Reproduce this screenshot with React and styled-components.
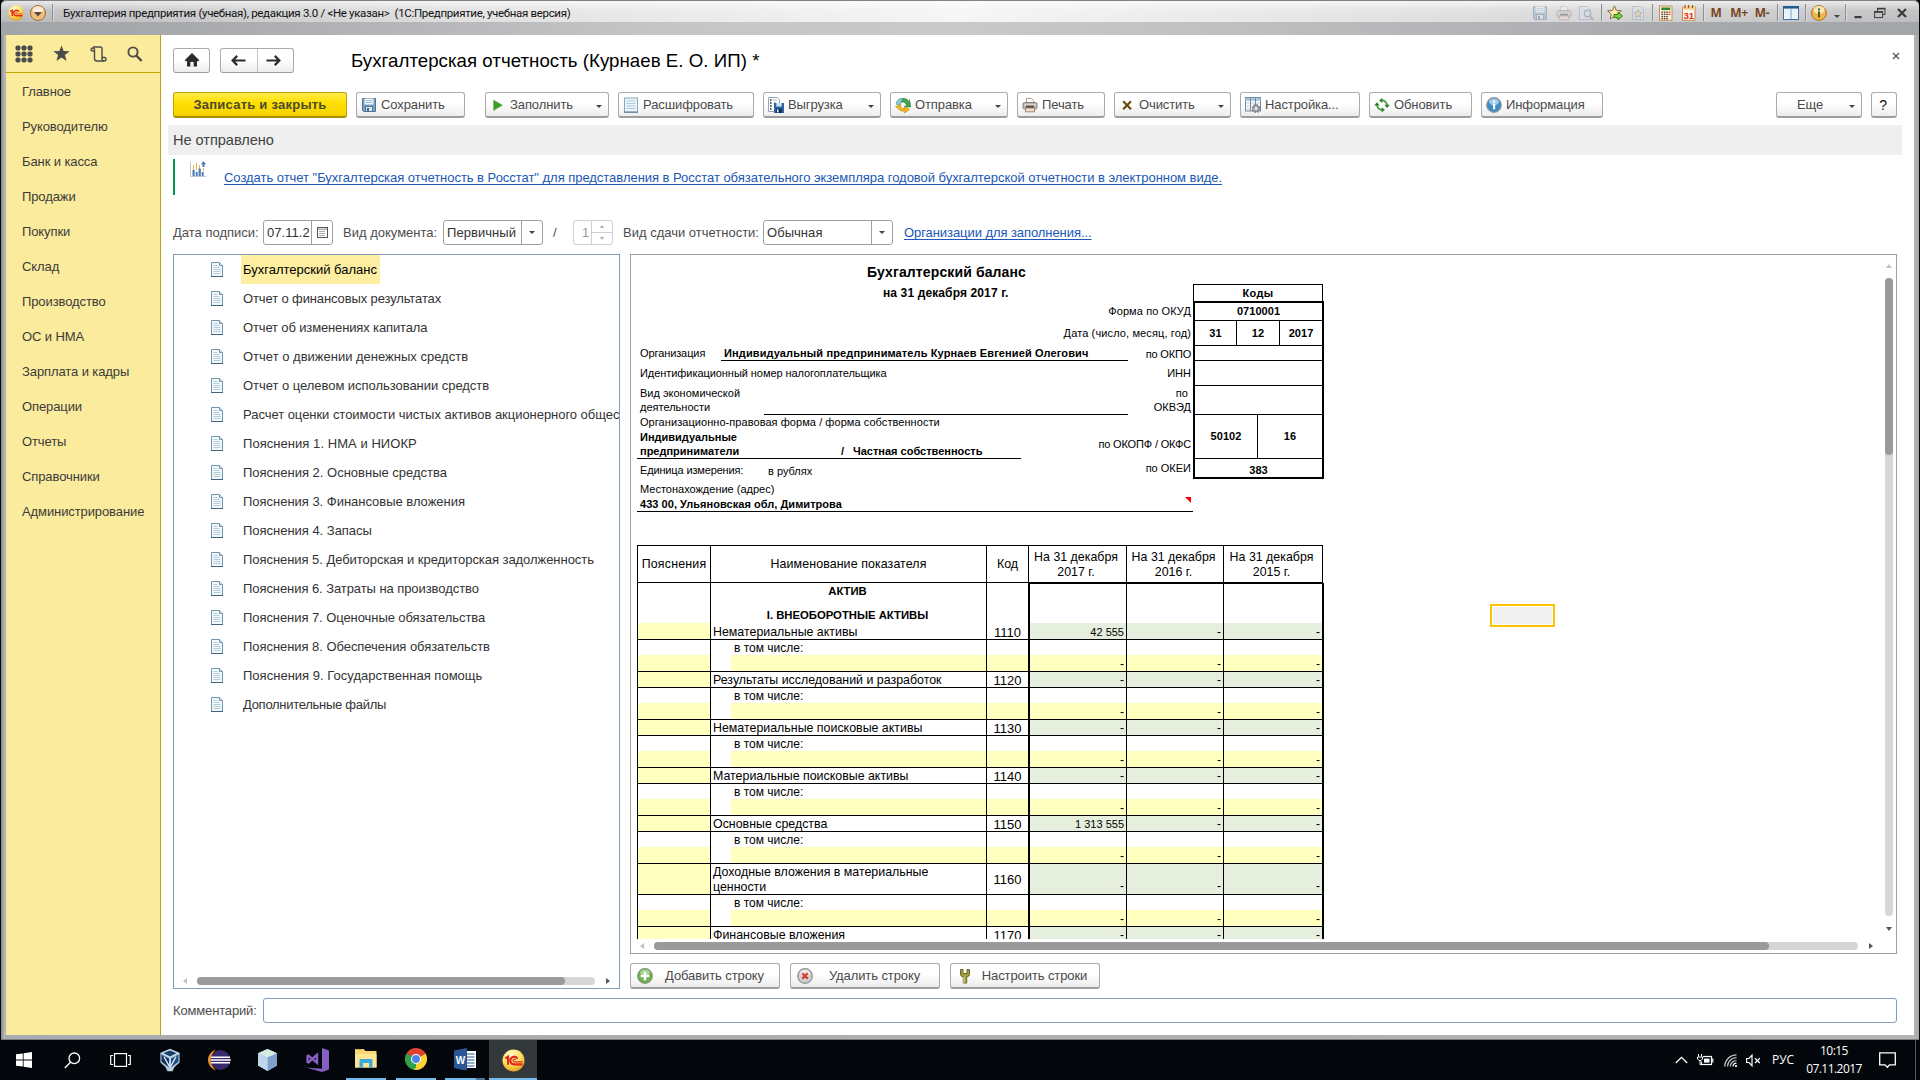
import React from "react";
import styled, { createGlobalStyle, css } from "styled-components";

const Global = createGlobalStyle`
  * { box-sizing: border-box; }
  html, body { margin: 0; padding: 0; background: #000; }
  body { font-family: "Liberation Sans", Arial, sans-serif; font-size: 13px; color: #444; overflow: hidden; }
`;

const Desktop = styled.div`
  width: 1920px;
  height: 1080px;
  display: flex;
  flex-direction: column;
  background: #050608;
  overflow: hidden;
`;

const Window = styled.div`
  height: 1040px;
  margin: 0 1px 0 1px;
  padding: 0 5px 5px 5px;
  display: flex;
  flex-direction: column;
  border-radius: 5px 5px 0 0;
  background: linear-gradient(90deg, #8b8b8e 0, #bcbcbe 4px, #a9aaad 5px, #b4b4b6 1913px, #a6a6a8 1918px);
  box-shadow: inset 0 -1px 0 #7c7c7e;
`;

/* ---------- title bar ---------- */
const TitleBar = styled.header`
  height: 22px;
  margin: 0 -5px;
  padding: 2px 5px 0 7px;
  flex: none;
  display: flex;
  align-items: center;
  border-top: 1px solid #807f82;
  border-radius: 6px 6px 0 0;
  background: linear-gradient(180deg, rgba(255,255,255,0.75) 0, rgba(255,255,255,0.35) 45%, rgba(255,255,255,0.25) 100%),
    linear-gradient(90deg, #a0a1a4 0, #d6d6d6 25%, #f2f2f2 50%, #d0d0d1 78%, #a5a6a9 100%);
`;
const TitleStrip = styled.div`
  height: 13px;
  margin: 0 -5px;
  flex: none;
  background: linear-gradient(90deg, #a3a4a7 0, #a9aaad 10%, #c6c6c7 35%, #c9c9ca 50%, #bfbfc0 65%, #a8a9ad 88%, #a4a5a9 100%);
`;
const OrbSlot = styled.span`
  width: ${(p) => p.$w}px;
  display: flex;
  flex: none;
`;
const BarSep = styled.i`
  width: 1px;
  height: 17px;
  flex: none;
  background: #8e8e91;
  box-shadow: 1px 0 0 #dedede;
  margin-left: ${(p) => p.$gap || 0}px;
`;
const WindowTitle = styled.div`
  margin-left: 10px;
  font: 11.5px/16px Roboto, "Open Sans", sans-serif;
  letter-spacing: -0.32px;
  color: #111;
  white-space: pre;
  flex: 1;
`;
const Slot = styled.span`
  width: ${(p) => p.$w}px;
  height: 18px;
  flex: none;
  display: flex;
  align-items: center;
  justify-content: center;
  opacity: ${(p) => (p.$dim ? 0.4 : 1)};
`;
const MemText = styled.b`
  font: bold 12px/16px "Open Sans", "Noto Sans", sans-serif;
  letter-spacing: -0.4px;
  color: #7a4520;
`;

/* ---------- frame ---------- */
const Client = styled.div`
  flex: 1;
  min-height: 0;
  display: flex;
  background: #fff;
`;
const Sidebar = styled.nav`
  width: 155px;
  flex: none;
  background: #fbeb9c;
  border-right: 1px solid #bca31b;
`;
const SideIcons = styled.div`
  height: 38px;
  display: flex;
  align-items: center;
  gap: 20px;
  padding-left: 9px;
  border-bottom: 1px solid #c4a800;
`;
const SideItem = styled.div`
  height: 35px;
  line-height: 35px;
  padding-left: 16px;
  letter-spacing: -0.1px;
  color: #3b3b3b;
  white-space: nowrap;
`;
const SideList = styled.div`
  padding-top: 1px;
`;
const Main = styled.main`
  flex: 1;
  min-width: 0;
  display: flex;
  flex-direction: column;
  padding: 12px 17px 0 12px;
`;

/* ---------- buttons ---------- */
const buttonFace = css`
  border: 1px solid #ababab;
  border-bottom: 2px solid #9d9d9d;
  border-radius: 3px;
  background: linear-gradient(180deg, #fff 0, #fff 45%, #ececec 100%);
`;
const Head = styled.div`
  height: 26px;
  display: flex;
  align-items: center;
`;
const NavButton = styled.div`
  ${buttonFace}
  border-bottom-width: 1px;
  width: 37px;
  height: 25px;
  display: flex;
  align-items: center;
  justify-content: center;
`;
const NavPair = styled.div`
  ${buttonFace}
  border-bottom-width: 1px;
  width: 74px;
  height: 25px;
  margin-left: 10px;
  display: grid;
  grid-template-columns: 1fr 1fr;
`;
const NavHalf = styled.span`
  display: flex;
  align-items: center;
  justify-content: center;
  padding-right: 1px;
  & + & { border-left: 1px solid #c4c4c4; padding-right: 4px; }
`;
const Title = styled.h1`
  margin: 1px auto 0 57px;
  font-size: 18.67px;
  font-weight: 400;
  line-height: 26px;
  color: #000;
  letter-spacing: 0.04px;
`;
const CloseX = styled.span`
  width: 10px;
  margin: 0 -5px 8px 0;
  display: flex;
`;
const Toolbar = styled.div`
  margin-top: 19px;
  height: 26px;
  display: flex;
  gap: 9px;
`;
const Button = styled.div`
  ${buttonFace}
  width: ${(p) => p.$w}px;
  height: 26px;
  margin-left: ${(p) => (p.$push === "auto" ? "auto" : `${p.$push || 0}px`)};
  padding: 0 6px 0 4px;
  display: flex;
  align-items: center;
  gap: ${(p) => (p.$gap === undefined ? 4 : p.$gap)}px;
  color: ${(p) => p.$ink || "#4a4a4a"};
  font-size: ${(p) => p.$fs || 13}px;
  white-space: nowrap;
  letter-spacing: -0.1px;
`;
const PrimaryButton = styled.div`
  width: 174px;
  height: 26px;
  border: 1px solid #bfa100;
  border-bottom: 2px solid #a88e00;
  border-radius: 3px;
  background: linear-gradient(180deg, #ffe94a 0, #ffe000 45%, #f5d200 100%);
  color: #4d4a2e;
  font-weight: 700;
  letter-spacing: 0.24px;
  display: flex;
  align-items: center;
  justify-content: center;
`;
const ButtonIcon = styled.span`
  width: 16px;
  height: 16px;
  flex: none;
  display: flex;
  align-items: center;
  justify-content: center;
`;
const ButtonText = styled.span`
  flex: ${(p) => (p.$center ? 1 : "none")};
  text-align: center;
`;
const Caret = styled.i`
  width: 0;
  height: 0;
  margin: ${(p) => p.$m || "4px 0 0 auto"};
  border: 3px solid transparent;
  border-top-color: ${(p) => p.$c || "#444"};
  border-bottom: 0;
  flex: none;
`;

const Status = styled.div`
  height: 30px;
  margin: 7px -5px 0 -5px;
  padding-left: 5px;
  line-height: 30px;
  font-size: 14.6px;
  letter-spacing: -0.05px;
  background: #efefef;
  color: #444;
`;
const Notice = styled.div`
  height: 36px;
  margin-top: 4px;
  border-left: 2px solid #00984a;
  padding: 2px 0 0 15px;
  display: flex;
  align-items: flex-start;
`;
const Link = styled.a`
  color: #2057b5;
  text-decoration: underline;
  text-underline-offset: 2px;
  text-decoration-thickness: 1px;
  text-decoration-skip-ink: none;
  white-space: nowrap;
  letter-spacing: ${(p) => p.$ls || 0}px;
  margin: ${(p) => p.$m || 0};
`;

/* ---------- fields ---------- */
const Filters = styled.div`
  height: 26px;
  margin-top: 24px;
  display: flex;
  align-items: center;
`;
const Label = styled.label`
  width: ${(p) => p.$w}px;
  flex: none;
  color: #4d4d4d;
  white-space: nowrap;
  letter-spacing: ${(p) => p.$ls || 0}px;
`;
const Field = styled.div`
  width: ${(p) => p.$w}px;
  height: 25px;
  margin-right: ${(p) => p.$mr || 0}px;
  flex: none;
  border: 1px solid ${(p) => (p.$off ? "#cfcfcf" : "#a0a0a0")};
  border-radius: 3px;
  display: flex;
  color: ${(p) => (p.$off ? "#999" : "#333")};
  background: #fff;
`;
const FieldText = styled.span`
  flex: 1;
  min-width: 0;
  overflow: hidden;
  padding-left: ${(p) => p.$pl || 3}px;
  line-height: 23px;
  white-space: nowrap;
  letter-spacing: 0.05px;
`;
const FieldKnob = styled.span`
  width: ${(p) => p.$w}px;
  border-left: 1px solid ${(p) => (p.$off ? "#cfcfcf" : "#a0a0a0")};
  display: flex;
  flex-direction: column;
  align-items: center;
  justify-content: center;
`;
const SpinHalf = styled.span`
  width: 100%;
  flex: 1;
  display: flex;
  align-items: center;
  justify-content: center;
  & + & { border-top: 1px solid #cfcfcf; }
`;
const SpinTip = styled.i`
  border: 2px solid transparent;
  ${(p) => (p.$up ? "border-bottom: 3px solid #aaa; border-top: 0;" : "border-top: 3px solid #aaa; border-bottom: 0;")}
`;

/* ---------- work area ---------- */
const Work = styled.div`
  height: 735px;
  margin-top: 9px;
  display: flex;
  gap: 10px;
`;
const TreePanel = styled.section`
  width: 447px;
  flex: none;
  border: 1px solid #7f9db9;
  display: flex;
  flex-direction: column;
  overflow: hidden;
`;
const TreeList = styled.div`
  flex: 1;
  min-height: 0;
  overflow: hidden;
`;
const TreeRow = styled.div`
  height: 29px;
  padding-left: 36px;
  display: flex;
  align-items: center;
  color: #333;
  white-space: nowrap;
  svg { flex: none; }
`;
const TreeLabel = styled.span`
  flex: none;
  margin-left: 17px;
  padding: 0 3px 0 2px;
  height: 29px;
  line-height: 30px;
  letter-spacing: ${(p) => p.$ls || 0}px;
  ${(p) => p.$active && css`background: #fdeea2; color: #000;`}
`;
const Right = styled.section`
  flex: 1;
  min-width: 0;
  display: flex;
  flex-direction: column;
`;
const ReportPanel = styled.div`
  height: 700px;
  border: 1px solid #a0a0a0;
  display: grid;
  grid-template: 684px 14px / 1fr 14px;
`;
const Sheet = styled.div`
  position: relative;
  overflow: hidden;
  padding-left: 6px;
  font-size: 11px;
  color: #000;
`;
const CellCursor = styled.div`
  position: absolute;
  left: 859px;
  top: 349px;
  width: 65px;
  height: 23px;
  border: 2px solid #fcc500;
  box-shadow: inset 0 0 0 1px #fff;
  background: #f1f1f1;
`;
const ScrollRow = styled.div`
  height: 14px;
  display: flex;
  align-items: center;
  padding: ${(p) => p.$p};
`;
const ScrollCol = styled.div`
  display: flex;
  flex-direction: column;
  align-items: center;
  padding: 9px 0 8px 0;
`;
const Track = styled.div`
  background: #d6d6d6;
  border-radius: 4px;
  ${(p) => (p.$v ? css`width: 8px; height: 638px; margin: 10px 0 11px;` : css`height: 8px; flex: 1; margin: 0 11px 0 10px;`)}
`;
const Thumb = styled.div`
  background: #9a9a9a;
  border-radius: 4px;
  ${(p) => (p.$v ? css`width: 8px; height: ${p.$len}px;` : css`height: 8px; width: ${p.$len}px;`)}
`;
const Tip = styled.i`
  width: 0;
  height: 0;
  flex: none;
  border: 3px solid transparent;
  ${(p) => p.$d === "left" && css`border-right: 4px solid #c0c0c0; border-left: 0;`}
  ${(p) => p.$d === "right" && css`border-left: 4px solid #555; border-right: 0;`}
  ${(p) => p.$d === "up" && css`border-bottom: 4px solid #c0c0c0; border-top: 0;`}
  ${(p) => p.$d === "down" && css`border-top: 4px solid #555; border-bottom: 0;`}
`;

/* ---------- report form header ---------- */
const FormHead = styled.div`
  display: flex;
  height: 290px;
`;
const FormLeft = styled.div`
  width: 556px;
`;
const FormRow = styled.div`
  height: ${(p) => p.$h}px;
  display: flex;
  align-items: center;
  line-height: 14px;
  white-space: nowrap;
  padding-left: ${(p) => (p.$pl === undefined ? 3 : p.$pl)}px;
  font-weight: ${(p) => (p.$b ? 700 : 400)};
  font-size: ${(p) => p.$fs || 11}px;
  padding-top: ${(p) => p.$pt || 0}px;
  padding-bottom: ${(p) => p.$pb || 0}px;
  letter-spacing: ${(p) => p.$ls || 0}px;
`;
const Value = styled.div`
  width: ${(p) => p.$w}px;
  height: 100%;
  padding-left: ${(p) => p.$pl || 0}px;
  display: flex;
  align-items: center;
  border-bottom: 1px solid ${(p) => (p.$line ? "#000" : "transparent")};
  font-weight: ${(p) => (p.$b ? 700 : 400)};
  letter-spacing: ${(p) => p.$ls || 0}px;
`;
const RowCode = styled.div`
  margin-left: auto;
  padding: 0 2px ${(p) => p.$lift || 0}px 0;
  text-align: right;
  letter-spacing: ${(p) => p.$ls || 0}px;
`;
const Owner = styled.span`
  width: ${(p) => p.$w}px;
  align-self: ${(p) => (p.$end ? "flex-end" : "center")};
`;
const RedMark = styled.i`
  margin: 1px 2px auto auto;
  border-top: 6px solid #f00;
  border-left: 6px solid transparent;
`;
const Codes = styled.div`
  width: 131px;
  padding-top: 29px;
  font-weight: 700;
  letter-spacing: 0.05px;
`;
const CodesHead = styled.div`
  width: 130px;
  height: 17px;
  line-height: 17px;
  text-align: center;
  border: 1px solid #000;
  border-bottom: 0;
  letter-spacing: 0.3px;
`;
const CodesBody = styled.div`
  border: 2px solid #000;
`;
const CodeLine = styled.div`
  height: ${(p) => p.$h}px;
  padding-top: ${(p) => p.$pt || 0}px;
  display: grid;
  grid-template-columns: ${(p) => p.$cols || "1fr"};
  & + & { border-top: 1px solid #000; }
`;
const CodeCell = styled.span`
  display: flex;
  align-items: center;
  justify-content: center;
  padding-bottom: 1px;
  & + & { border-left: 1px solid #000; }
`;

/* ---------- balance table ---------- */
const cols = "73px 276px 43px 97px 97px 100px";
const Table = styled.div`
  width: 687px;
  border-left: 1px solid #000;
  font-size: 12.4px;
  line-height: 15px;
`;
const HeadRow = styled.div`
  width: 685px;
  height: 38px;
  display: grid;
  grid-template-columns: 73px 276px 42px 98px 97px 99px;
  border-top: 1px solid #000;
`;
const HeadCell = styled.div`
  display: flex;
  align-items: center;
  justify-content: center;
  text-align: center;
  white-space: nowrap;
  padding: ${(p) => p.$p || 0};
  border-right: 1px solid #000;
  border-bottom: 1px solid #000;
  letter-spacing: ${(p) => p.$ls || 0}px;
`;
const BodyRow = styled.div`
  height: ${(p) => p.$h}px;
  display: grid;
  grid-template-columns: ${cols};
  grid-template-rows: ${(p) => p.$h}px;
`;
const fills = { y: "#ffffc0", g: "#e6efdd", w: "#fff" };
const Cell = styled.div`
  min-width: 0;
  min-height: 0;
  display: flex;
  white-space: nowrap;
  background: ${(p) => fills[p.$fill || "w"]};
  border-right: ${(p) => (p.$thick ? 2 : 1)}px solid #000;
  border-bottom: ${(p) => (p.$line ? "1px solid #000" : "0")};
  border-top: ${(p) => (p.$top ? "1px solid #000" : "0")};
  align-items: ${(p) => p.$align || "center"};
  justify-content: ${(p) => p.$justify || "flex-start"};
  padding: ${(p) => (p.$pt === undefined ? 2 : p.$pt)}px 2px 0 2px;
  font-size: ${(p) => p.$fs || 12.4}px;
`;
const NameCell = styled(Cell)`
  padding-left: ${(p) => (p.$indent ? 23 : 2)}px;
`;
const IndentCell = styled.div`
  padding-left: 20px;
  background: #fff;
  border-right: 1px solid #000;
  border-bottom: 1px solid #000;
  &::before { content: ""; display: block; height: 100%; background: #ffffc0; }
`;
const Section = styled.div`
  padding: 1px 2px 0 0;
  border-right: 1px solid #000;
  font-size: 11.3px;
  font-weight: 700;
  text-align: center;
  display: flex;
  flex-direction: column;
  justify-content: space-between;
`;
const Num = styled.span`
  font-size: ${(p) => (p.$dash ? 12 : 11)}px;
`;

const RowActions = styled.div`
  margin-top: 9px;
  display: flex;
  gap: 10px;
`;
const ActionButton = styled(Button)`
  padding: 0 7px 0 6px;
`;
const Comment = styled.div`
  height: 26px;
  margin-top: 8px;
  display: flex;
  align-items: center;
`;
const CommentInput = styled.div`
  flex: 1;
  height: 25px;
  border: 1px solid #7f9db9;
  border-radius: 3px;
`;

/* ---------- taskbar ---------- */
const Taskbar = styled.footer`
  height: 40px;
  display: flex;
  background: #03070c;
  color: #fff;
  font: 12px/18px "Open Sans", "Noto Sans", sans-serif;
`;
const Task = styled.span`
  width: ${(p) => p.$w}px;
  height: 40px;
  flex: none;
  display: flex;
  align-items: center;
  justify-content: center;
  background: ${(p) => (p.$active ? "#33383b" : "none")};
  box-shadow: ${(p) => (p.$active ? "inset 0 -2px 0 #76b9ed" : "none")};
`;
const OpenTask = styled(Task)`
  flex-direction: column;
  justify-content: space-between;
  padding-top: 8px;
`;
const Under = styled.i`
  width: 40px;
  height: 2px;
  background: ${(p) => (p.$stack ? "linear-gradient(90deg, #76b9ed 0 31px, #4a7596 31px)" : "#76b9ed")};
`;
const Tray = styled.div`
  margin-left: auto;
  display: flex;
  align-items: center;
`;
const Clock = styled.div`
  width: 62px;
  margin-left: 5px;
  text-align: center;
  letter-spacing: -0.55px;
`;
const Lang = styled.span`
  width: 30px;
  margin-left: 4px;
  text-align: center;
  letter-spacing: -0.1px;
`;
const PeekLine = styled.i`
  width: 1px;
  height: 40px;
  margin: 0 4px 0 6px;
  background: #54585b;
`;

/* ---------- icons ---------- */
const Svg = ({ w = 16, h = w, vb, children }) => (
  <svg width={w} height={h} viewBox={vb || `0 0 ${w} ${h}`} display="block">{children}</svg>
);
const Orb1C = ({ s = 15 }) => (
  <Svg w={s} vb="0 0 24 24">
    <defs>
      <radialGradient id={`orb${s}`} cx="0.4" cy="0.25" r="0.8">
        <stop offset="0" stopColor="#fffbd0" /><stop offset="0.55" stopColor="#ffdf5e" /><stop offset="1" stopColor="#e09a1c" />
      </radialGradient>
    </defs>
    <circle cx="12" cy="12" r="11.5" fill={`url(#orb${s})`} />
    <g fill="none" stroke="#e0281c" strokeWidth="2.2">
      <path d="M3.5 9.8 L6.3 8 V16.5" />
      <path d="M16.2 10.2 A4 4 0 1 0 13 16 H21.5" />
      <path d="M14.2 11.6 A1.4 1.4 0 1 0 13 13.4 H21.5" strokeWidth="1.2" />
    </g>
  </Svg>
);
const MenuOrb = () => (
  <Svg w={16}>
    <circle cx="8" cy="8" r="7.5" fill="#efbe7c" stroke="#9c6f38" />
    <ellipse cx="8" cy="4.8" rx="5.5" ry="3.6" fill="#fbe9cf" />
    <path d="M4 7 H12 L8 11.5 Z" fill="#5b4a38" /><path d="M4 5.6H12" stroke="#fff" />
  </Svg>
);
const Floppy = ({ s = 16 }) => (
  <Svg w={s} vb="0 0 16 16">
    <path d="M1.5 1.5H14.5V14.5H2.5L1.5 13.5Z" fill="#7ba0c0" stroke="#4e7698" />
    <rect x="3.5" y="1.5" width="9" height="6" fill="#f4f8fb" /><path d="M4.5 3.5h7M4.5 5.5h7" stroke="#9db8cc" />
    <rect x="4.5" y="9.5" width="7" height="5" fill="#dfe6ea" stroke="#4e7698" /><rect x="6" y="11" width="2" height="3" fill="#42617c" />
  </Svg>
);
const Printer = () => (
  <Svg w={16}>
    <path d="M4.5 6V1.5h5l2 2V6" fill="#fff" stroke="#a9a19a" />
    <rect x="1" y="5.5" width="14" height="6.5" rx="1.5" fill="#b8b3ae" stroke="#8b847d" />
    <path d="M2 8h12" stroke="#ece8e4" /><rect x="4" y="8.7" width="8" height="3" fill="#4f4640" />
    <rect x="3.5" y="11" width="9" height="3.8" fill="#f2dccb" stroke="#9b8a7c" />
  </Svg>
);
const Preview = () => (
  <Svg w={16}>
    <path d="M1.5 1.5H9L12.5 5V14.5H1.5Z" fill="#dfe9f1" stroke="#7d9cb5" />
    <circle cx="9.5" cy="8.5" r="3.2" fill="#cfe4f5" stroke="#58809f" strokeWidth="1.4" /><path d="M12 11L15 15" stroke="#a07550" strokeWidth="2" />
  </Svg>
);
const StarAdd = () => (
  <Svg w={16}>
    <path d="M7.5 .8L9.4 5.4 14.3 5.8 10.6 9 11.7 14 7.5 11.3 3.2 14 4.3 9 .6 5.8 5.5 5.4Z" fill="#ffe9b5" stroke="#8b6d3f" />
    <path d="M7 9.5H11V7L15.5 11 11 15V12.5H7Z" fill="#79d23c" stroke="#2e7d14" />
  </Svg>
);
const StarPage = () => (
  <Svg w={14} h={16}>
    <path d="M1.5 1.5H9L12.5 5V14.5H1.5Z" fill="#dbe7ef" stroke="#7d9cb5" />
    <path d="M7 4.5L8.2 7.3 11 7.5 8.8 9.4 9.6 12.4 7 10.8 4.4 12.4 5.2 9.4 3 7.5 5.8 7.3Z" fill="#efd9b0" stroke="#9b7a4c" />
  </Svg>
);
const Calc = () => (
  <Svg w={14} h={16}>
    <rect x=".5" y="1" width="12.5" height="14.3" fill="#fdf0d8" stroke="#c79358" />
    <rect x="2.3" y="2.5" width="9" height="2.6" fill="#2d8a2f" />
    <g fill="#4a3526">{[6.5, 8.7, 10.9, 13].map((y) => [2.5, 4.9, 7.3].map((x) => <rect key={`${x}-${y}`} x={x} y={y} width="1.5" height="1.3" />))}</g>
    <g fill="#d33"><rect x="9.7" y="6.5" width="1.6" height="1.3" /><rect x="9.7" y="8.7" width="1.6" height="1.3" /></g>
  </Svg>
);
const CalendarIcon = () => (
  <Svg w={14} h={16}>
    <rect x=".5" y="2" width="12.5" height="13.3" fill="#fff6ea" stroke="#c58b4e" /><rect x=".5" y="1" width="12.5" height="3.5" fill="#f2c88f" />
    <path d="M3 0v3M6.7 0v3M10.5 0v3" stroke="#7b4c1c" />
    <text x="6.8" y="13.6" fontSize="9.5" fontFamily="Liberation Sans" fontWeight="700" fill="#e0301e" textAnchor="middle">31</text>
  </Svg>
);
const Panes = () => (
  <Svg w={16} h={14}>
    <rect x=".5" y=".5" width="15" height="13" fill="#fff" stroke="#3f6f9c" /><rect x="0" y="0" width="16" height="2.6" fill="#1f5a90" />
    <path d="M8 2v11" stroke="#6f95b8" /><path d="M1.5 12.5V3H7V12.5ZM9 12.5V3H14.5V12.5Z" fill="#eaf2f9" />
  </Svg>
);
const InfoOrange = () => (
  <Svg w={16}>
    <circle cx="8" cy="8" r="7.4" fill="#f7b24a" stroke="#a8702a" /><ellipse cx="8" cy="5" rx="5.6" ry="3.9" fill="#fde3b4" />
    <rect x="7" y="6.4" width="2" height="6" fill="#2d6f1e" /><rect x="7" y="3.4" width="2" height="2" fill="#2d6f1e" />
  </Svg>
);
const InfoBlue = () => (
  <Svg w={16}>
    <circle cx="8" cy="8" r="7.3" fill="#3f8cc5" stroke="#90989d" strokeWidth="1.2" /><ellipse cx="8" cy="4.8" rx="5" ry="3.3" fill="#9dcbea" />
    <rect x="7" y="6.7" width="2.2" height="5.6" fill="#fff" /><rect x="7" y="3.6" width="2.2" height="2" fill="#fff" />
  </Svg>
);
const Minus = () => <Svg w={8} h={12}><rect x="0.5" y="9" width="7" height="2.2" fill="#3c3c3e" /></Svg>;
const Restore = () => (
  <Svg w={12} h={12}><path d="M3.5 4V1.5H11V7.5H9" fill="none" stroke="#3c3c3e" /><path d="M3 1.6H11.4" stroke="#3c3c3e" strokeWidth="1.6" /><rect x=".6" y="4.6" width="8" height="6" fill="none" stroke="#3c3c3e" /><path d="M.2 5H9" stroke="#3c3c3e" strokeWidth="1.6" /></Svg>
);
const Cross = () => <Svg w={10}><path d="M1 1L9 9M9 1L1 9" stroke="#3c3c3e" strokeWidth="2.2" /></Svg>;
const ThinCross = () => <Svg w={8}><path d="M1 1L7 7M7 1L1 7" stroke="#555" strokeWidth="1.3" /></Svg>;
const GridIcon = () => (
  <Svg w={18}>{[3, 9, 15].map((y) => [3, 9, 15].map((x) => <rect key={`${x}${y}`} x={x - 2.5} y={y - 2.5} width="5" height="5" rx="1.8" fill="#4b4b4b" />))}</Svg>
);
const SideStar = () => <Svg w={17}><path d="M8.5 .4L10.6 6 16.7 6.3 11.9 10 13.6 16 8.5 12.5 3.4 16 5.1 10 .3 6.3 6.4 6Z" fill="#4b4b4b" /></Svg>;
const Scroll = () => (
  <Svg w={17} h={16}>
    <path d="M4.5 5V3A2 2 0 0 0 1 3.2Q1 5 3 5H4.5V12.5Q4.5 15 7 15H13.5" fill="none" stroke="#4b4b4b" strokeWidth="1.4" />
    <path d="M3 1H10Q12 1 12 3V11.5H14.7Q16 11.5 16 13A2 2 0 0 1 12 13V11.5" fill="none" stroke="#4b4b4b" strokeWidth="1.4" />
  </Svg>
);
const SideSearch = () => <Svg w={16}><circle cx="6" cy="6" r="4.6" fill="none" stroke="#4b4b4b" strokeWidth="1.9" /><path d="M9.3 9.5L14.6 15" stroke="#4b4b4b" strokeWidth="2.5" /></Svg>;
const Home = () => <Svg w={16} h={14}><path d="M8 0L15.3 7.3 14 8.6 13 7.7V13.5H9.6V9H6.4V13.5H3V7.7L2 8.6 .7 7.3Z" fill="#2b2b2b" /></Svg>;
const Arrow = ({ flip }) => (
  <Svg w={15} h={11}><g transform={flip ? "translate(15 0) scale(-1 1)" : undefined}><path d="M1.5 5.5H14.5M6.2 .9L1.6 5.5 6.2 10.1" fill="none" stroke="#2b2b2b" strokeWidth="2.2" /></g></Svg>
);
const Play = () => <Svg w={16}><path d="M3.5 3L12.5 8.2 3.5 13.5Z" fill="#36a11e" stroke="#7fa874" strokeWidth=".6" /></Svg>;
const ListDoc = () => (
  <Svg w={16}><rect x="1.5" y="1" width="13" height="14" fill="#eef5fa" stroke="#88a8bf" /><path d="M3.5 4h9M3.5 6.5h9M3.5 9h9M3.5 11.5h9" stroke="#aac9dc" /><path d="M1 15.2h14" stroke="#4f7896" /></Svg>
);
const ExportIcon = () => (
  <Svg w={16}>
    <path d="M.5 .5H9.5L11.5 3V14.5H.5Z" fill="#fff" stroke="#98a7b3" /><path d="M2 3h1.5M2 6h1.5M2 9h1.5M2 12h1.5" stroke="#222" strokeWidth="1.5" /><path d="M5 3h4M5 6h3" stroke="#9fb8cb" />
    <rect x="6" y="6" width="10" height="10" fill="#2d62a0" /><rect x="8.3" y="6" width="5.4" height="3.6" fill="#cfe2f2" /><rect x="8.3" y="11.6" width="5.4" height="4.4" fill="#0f2d55" /><rect x="9" y="12.4" width="1.6" height="3" fill="#e9eef3" />
  </Svg>
);
const SendIcon = () => (
  <Svg w={16}>
    <path d="M1 7Q2 1.2 8 1.2 13 1.2 14.5 6V2.5L16 10H9L11.5 8Q10 5 8 5 5.5 5 4.5 8Z" fill="#3fa24d" stroke="#2a7a3a" strokeWidth=".5" />
    <path d="M1 7Q2 1.2 7 1.2L6 5.3Q5 6 4.5 8Z" fill="#8cc3dd" />
    <path d="M.5 9.5L6 7.5 5.5 10Q7 12 9.5 11.5V9.5L14.5 12.5 9.5 16V14.2Q4.5 14.5 3 11.4Z" fill="#f5b81c" stroke="#b98406" strokeWidth=".6" />
  </Svg>
);
const ClearX = () => <Svg w={16}><path d="M4.2 4.2L12 12.3M12 4.2L4.2 12.3" stroke="#6b4a08" strokeWidth="2.1" /></Svg>;
const TableGear = () => (
  <Svg w={16}>
    <rect x=".5" y=".5" width="15" height="13.5" fill="#fff" stroke="#6d8ba8" /><path d="M.5 2.5h15" stroke="#a8c0d6" strokeWidth="2.6" />
    <path d="M5.5 1v13M10.5 1v13" stroke="#6d8ba8" /><path d="M1.5 6h3M1.5 9h3M1.5 12h3M6.5 6h3M11.5 6h3" stroke="#b1bfca" />
    <circle cx="11" cy="11.5" r="3.6" fill="#a2a2a8" stroke="#77777d" strokeWidth="1.6" strokeDasharray="1.7 1.1" /><circle cx="11" cy="11.5" r="1.4" fill="#eee" />
  </Svg>
);
const Refresh = () => (
  <Svg w={16}>
    <path d="M13 8.2A5 5 0 0 0 7.5 3.4" fill="none" stroke="#3f9c35" strokeWidth="1.8" /><path d="M8.3 .8V6L5.2 3.4Z" fill="#2c7d24" /><path d="M10.4 7.8H15.8L13.1 11Z" fill="#2c7d24" />
    <path d="M3 8A5 5 0 0 0 8.5 12.8" fill="none" stroke="#3f9c35" strokeWidth="1.8" /><path d="M7.7 10.2V15.4L10.8 12.8Z" fill="#2c7d24" /><path d="M.2 8.4H5.6L2.9 5.2Z" fill="#2c7d24" />
  </Svg>
);
const ChartUp = () => (
  <Svg w={16}>
    <path d="M.5 1V15.5H16" fill="none" stroke="#b9c8d6" /><path d="M3.5 4v5M6.5 2v7M9.5 4v5M13.5 7v3" stroke="#e8b25a" />
    <rect x="2.5" y="9" width="2.2" height="6" fill="#4f7fb5" /><rect x="5.7" y="11" width="2" height="4" fill="#4f7fb5" /><rect x="8.6" y="7.5" width="2.2" height="7.5" fill="#4f7fb5" /><rect x="11.7" y="11" width="2" height="4" fill="#4f7fb5" />
    <path d="M13.5 .2L16 3.2H14.4V6H12.6V3.2H11Z" fill="#3d6fc0" />
  </Svg>
);
const MiniCalendar = () => (
  <Svg w={11} h={11}><rect x=".5" y=".5" width="10" height="10" fill="#fff" stroke="#555" /><path d="M1 2.2h9" stroke="#888" /><path d="M2.5 4.5h6M2.5 6.5h6M2.5 8.5h6" stroke="#555" strokeDasharray="1 1" /></Svg>
);
const FileIcon = () => (
  <Svg w={14} h={15}>
    <path d="M1.5 .5H9.5L12.5 3.5V14.5H1.5Z" fill="#f3f8fb" stroke="#7095ad" /><path d="M9.5 .5V3.5H12.5" fill="#d5e5ef" stroke="#7095ad" />
    <path d="M3.5 3.5h4M3.5 5.5h6M3.5 7.5h7M3.5 9.5h7M3.5 11.5h7" stroke="#b4ccdb" /><path d="M1 14.5H13" stroke="#3d6482" />
  </Svg>
);
const AddRound = () => (
  <Svg w={16}><circle cx="8" cy="8" r="7.3" fill="#6fb04c" stroke="#7f927a" strokeWidth="1.2" /><ellipse cx="8" cy="4.6" rx="5" ry="3" fill="#a7d38c" /><path d="M8 3.7V12.3M3.7 8H12.3" stroke="#fff" strokeWidth="2.6" /></Svg>
);
const DelRound = () => (
  <Svg w={16}><circle cx="8" cy="8" r="7.3" fill="#cfcfd1" stroke="#8e8e92" strokeWidth="1.2" /><ellipse cx="8" cy="5" rx="5" ry="3.2" fill="#e8e8ea" /><path d="M5.3 5.3L10.7 10.7M10.7 5.3L5.3 10.7" stroke="#d8392b" strokeWidth="2.2" /></Svg>
);
const Wrench = () => (
  <Svg w={16}><path d="M3.5 1.5V6Q3.5 8.5 6.3 9V15H9.7V9Q12.5 8.5 12.5 6V1.5H10V5.5H6V1.5Z" fill="#a6a03c" stroke="#5e5a22" strokeWidth=".9" /><path d="M7 9V15" stroke="#e3dfa0" /></Svg>
);

/* taskbar drawings */
const WinLogo = () => <Svg w={16}><path d="M0 2.3L6.8 1.4V7.6H0ZM7.6 1.3L16 0V7.6H7.6ZM0 8.4H6.8V14.6L0 13.7ZM7.6 8.4H16V16L7.6 14.8Z" fill="#fff" /></Svg>;
const TaskSearch = () => <Svg w={17}><circle cx="10.3" cy="6.3" r="5.3" fill="none" stroke="#fff" strokeWidth="1.3" /><path d="M6.5 10.2L.8 16" stroke="#fff" strokeWidth="1.4" /></Svg>;
const TaskView = () => <Svg w={21} h={14}><rect x="4.5" y=".6" width="12" height="12.8" fill="none" stroke="#fff" strokeWidth="1.2" /><path d="M3 2.5H.7V11.5H3M18 2.5H20.3V11.5H18" fill="none" stroke="#fff" strokeWidth="1.2" /></Svg>;
const VBox = () => (
  <Svg w={22} h={24}>
    <path d="M11 .8L20.6 4.8V14.5L15.5 19 13.5 23.3H8.5L6.5 19 1.4 14.5V4.8Z" fill="#b9cfe2" />
    <path d="M11 2L18.6 5.1 11 9 3.4 5.1Z" fill="#173f6c" stroke="#e4eef6" strokeWidth=".8" />
    <path d="M2.5 6.5L10 10.4V19.5L2.5 13.8Z" fill="#12345c" /><path d="M19.5 6.5L12 10.4V19.5L19.5 13.8Z" fill="#1f5084" />
    <path d="M5 8.6L10.4 18.6M17 8.6L11.6 18.6" stroke="#dbe8f3" strokeWidth="1.3" />
  </Svg>
);
const Eclipse = () => (
  <Svg w={24} h={22}>
    <path d="M9 .8A10.5 10.5 0 0 0 9 21.2 13 13 0 0 1 9 .8Z" fill="#f0922a" /><circle cx="13.5" cy="11" r="10" fill="#382a6b" />
    <path d="M4 8.2H23M3.6 11H23.8M4 13.8H23" stroke="#fff" strokeWidth="1.5" />
  </Svg>
);
const NetBeans = () => (
  <Svg w={21} h={24}>
    <path d="M10.5 1L20 5.2V17.5L10.5 23 1 17.5V5.2Z" fill="#a6c1df" /><path d="M10.5 1L20 5.2 10.5 9.6 1 5.2Z" fill="#d5edde" /><path d="M10.5 9.6L20 5.2V17.5L10.5 23Z" fill="#7fa0cb" /><path d="M1 5.2L10.5 9.6V23L1 17.5Z" fill="#bcd6ea" />
  </Svg>
);
const VS = () => <Svg w={24}><path d="M17 0L24 2.4V21.6L17 24 1 19.4 17 20.8Z" fill="#865fc5" /><path d="M2.6 7V15M2.6 7L12 14.8V6.8L2.6 15" fill="none" stroke="#865fc5" strokeWidth="2.4" /></Svg>;
const Folder = () => (
  <Svg w={22} h={20}><path d="M0 1H8.5L10.5 3H21.5V19.5H0Z" fill="#f7d774" /><path d="M0 6H21.5V19.5H0Z" fill="#fde596" /><path d="M.8 1.5H7" stroke="#e0a93b" /><path d="M4.5 19.5V12Q4.5 11 5.5 11H16.5Q17.5 11 17.5 12V19.5H14V15H8V19.5Z" fill="#3fa9df" /></Svg>
);
const Chrome = () => (
  <Svg w={22} vb="0 0 24 24">
    <path d="M12 12L1.6 6A12 12 0 0 1 22.4 6Z" fill="#e0402f" /><path d="M12 12L22.4 6A12 12 0 0 1 12 24Z" fill="#fdd033" /><path d="M12 12L12 24A12 12 0 0 1 1.6 6Z" fill="#2fa24c" />
    <path d="M12 6.5H22.6A12 12 0 0 0 20 3Z" fill="#e0402f" /><path d="M7.2 14.8L1.6 6 7.2 9.2Z" fill="#2fa24c" /><path d="M16.8 14.7L12 24 9.8 23.8Z" fill="#fdd033" />
    <circle cx="12" cy="12" r="5.5" fill="#fff" /><circle cx="12" cy="12" r="4.3" fill="#4a84ef" />
  </Svg>
);
const Word = () => (
  <Svg w={22}>
    <rect x="12" y="3" width="10" height="17" fill="#fff" /><path d="M13 6h7.5M13 9h7.5M13 12h7.5M13 15h7.5M13 18h7.5" stroke="#2b5797" strokeWidth="1.2" /><path d="M0 2.5L13 0V23L0 20Z" fill="#2b5797" />
    <text x="6.4" y="15.5" textAnchor="middle" fontFamily="Liberation Sans" fontWeight="700" fontSize="10" fill="#fff">W</text>
  </Svg>
);
const TrayUp = () => <Svg w={13} h={8}><path d="M.8 7L6.5 1.3 12.2 7" fill="none" stroke="#fff" strokeWidth="1.3" /></Svg>;
const Battery = () => (
  <Svg w={17} h={12}><rect x="4.5" y="2.5" width="10" height="8" fill="none" stroke="#fff" strokeWidth="1.2" /><path d="M15.8 4.5v4" stroke="#fff" strokeWidth="1.2" /><rect x="7" y="4.6" width="5.5" height="4" fill="#fff" /><rect x="0" y="0" width="6" height="7.5" fill="#03070c" /><path d="M1.5 0v2.5M4.5 0v2.5M.5 3h5v2l-1.5 1.5H2L.5 5ZM3 6.5V10.5H5" fill="none" stroke="#fff" /></Svg>
);
const Wifi = () => (
  <Svg w={13} h={13}><path d="M.7 12.5A12 12 0 0 1 12.5 .8M3.5 12.5A9 9 0 0 1 12.5 3.7M6.3 12.5A6.2 6.2 0 0 1 12.5 6.5" fill="none" stroke="#c9c9c9" strokeWidth="1.2" /><path d="M9 12.5A3.5 3.5 0 0 1 12.5 9.2" fill="none" stroke="#fff" strokeWidth="1.3" /><circle cx="12" cy="12" r="1.1" fill="#fff" /></Svg>
);
const Muted = () => <Svg w={15} h={13}><path d="M.6 4.5H3L6 1.2V11.8L3 8.5H.6Z" fill="none" stroke="#fff" strokeWidth="1.2" /><path d="M9 4.3L13.8 9M13.8 4.3L9 9" stroke="#fff" strokeWidth="1.2" /></Svg>;
const Note = () => <Svg w={17} h={17}><path d="M.7 .9H16.3V12.8H10.5L8.3 15.2 6 12.8H.7Z" fill="none" stroke="#fff" strokeWidth="1.3" /></Svg>;

/* ---------- data ---------- */
const menu = ["Главное", "Руководителю", "Банк и касса", "Продажи", "Покупки", "Склад", "Производство", "ОС и НМА", "Зарплата и кадры", "Операции", "Отчеты", "Справочники", "Администрирование"];
const tree = [
  ["Бухгалтерский баланс", 0],
  ["Отчет о финансовых результатах", -0.12],
  ["Отчет об изменениях капитала", -0.14],
  ["Отчет о движении денежных средств", 0],
  ["Отчет о целевом использовании средств", -0.04],
  ["Расчет оценки стоимости чистых активов акционерного общества", -0.04],
  ["Пояснения 1. НМА и НИОКР", 0.05],
  ["Пояснения 2. Основные средства", 0],
  ["Пояснения 3. Финансовые вложения", -0.02],
  ["Пояснения 4. Запасы", -0.02],
  ["Пояснения 5. Дебиторская и кредиторская задолженность", -0.05],
  ["Пояснения 6. Затраты на производство", -0.07],
  ["Пояснения 7. Оценочные обязательства", -0.07],
  ["Пояснения 8. Обеспечения обязательств", -0.05],
  ["Пояснения 9. Государственная помощь", 0.02],
  ["Дополнительные файлы", -0.28],
];
const tools = [
  { t: "Сохранить", w: 109, icon: <Floppy /> },
  { t: "Заполнить", w: 124, icon: <Play />, push: 11, drop: true },
  { t: "Расшифровать", w: 136, icon: <ListDoc /> },
  { t: "Выгрузка", w: 118, icon: <ExportIcon />, drop: true },
  { t: "Отправка", w: 118, icon: <SendIcon />, drop: true },
  { t: "Печать", w: 88, icon: <Printer /> },
  { t: "Очистить", w: 117, icon: <ClearX />, drop: true },
  { t: "Настройка...", w: 120, icon: <TableGear /> },
  { t: "Обновить", w: 103, icon: <Refresh /> },
  { t: "Информация", w: 122, icon: <InfoBlue /> },
];
const balance = [
  { name: "Нематериальные активы", code: "1110", v: ["42 555", "-", "-"], h: 17 },
  { name: "Результаты исследований и разработок", code: "1120", h: 16 },
  { name: "Нематериальные поисковые активы", code: "1130", h: 16 },
  { name: "Материальные поисковые активы", code: "1140", h: 16 },
  { name: "Основные средства", code: "1150", v: ["1 313 555", "-", "-"], h: 16 },
  { name: <>Доходные вложения в материальные<br />ценности</>, code: "1160", h: 31 },
  { name: "Финансовые вложения", code: "1170", h: 16 },
];

const Item = ({ d }) => {
  const v = d.v || ["-", "-", "-"];
  const tall = d.h > 20;
  return (
    <>
      <BodyRow $h={d.h}>
        <Cell $fill="y" $line />
        <NameCell $line><span>{d.name}</span></NameCell>
        <Cell $line $thick $justify="center" $fs={13} $pt={tall ? 0 : 2}>{d.code}</Cell>
        {v.map((x, i) => (
          <Cell key={i} $fill="g" $line $thick={i === 2} $justify="flex-end" $align={tall ? "flex-end" : "center"}><Num $dash={x === "-"}>{x}</Num></Cell>
        ))}
      </BodyRow>
      <BodyRow $h={15}>
        <Cell /><NameCell $indent $fs={12}>в том числе:</NameCell><Cell $thick /><Cell /><Cell /><Cell $thick />
      </BodyRow>
      <BodyRow $h={17}>
        <Cell $fill="y" $line /><IndentCell /><Cell $fill="y" $line $thick />
        {[0, 1, 2].map((i) => <Cell key={i} $fill="y" $line $thick={i === 2} $justify="flex-end"><Num $dash>-</Num></Cell>)}
      </BodyRow>
    </>
  );
};

const Report = () => (
  <Sheet>
    <FormHead>
      <FormLeft>
        <FormRow $h={29} $pl={230} $b $fs={14} $pt={5} $ls={0.12}>Бухгалтерский баланс</FormRow>
        <FormRow $h={18} $pl={246} $b $fs={12} $ls={0.12}>на 31 декабря 2017 г.</FormRow>
        <FormRow $h={18} $pb={1}><RowCode $ls={0.1}>Форма по ОКУД</RowCode></FormRow>
        <FormRow $h={26}><RowCode $ls={0.12}>Дата (число, месяц, год)</RowCode></FormRow>
        <FormRow $h={15}>
          <Value $w={81} $ls={-0.1}>Организация</Value><Value $w={407} $pl={3} $b $line $ls={0.12}>Индивидуальный предприниматель Курнаев Евгенией Олегович</Value><RowCode $ls={-0.2}>по ОКПО</RowCode>
        </FormRow>
        <FormRow $h={25} $ls={-0.06} $pb={2}><span>Идентификационный номер налогоплательщика</span><RowCode>ИНН</RowCode></FormRow>
        <FormRow $h={29}>
          <Value $w={124}><span>Вид экономической<br />деятельности</span></Value><Value $w={364} $line /><RowCode $lift={2}><span>по&nbsp;</span><br />ОКВЭД</RowCode>
        </FormRow>
        <FormRow $h={14} $ls={0.06}>Организационно-правовая форма / форма собственности</FormRow>
        <FormRow $h={30} $pl={0}>
          <Value $w={384} $pl={3} $b $line>
            <Owner $w={201}>Индивидуальные<br />предприниматели</Owner><Owner $w={12} $end>/</Owner><Owner $end>Частная собственность</Owner>
          </Value>
          <RowCode $ls={-0.15}>по ОКОПФ / ОКФС</RowCode>
        </FormRow>
        <FormRow $h={23}><Value $w={128} $ls={-0.15}>Единица измерения:</Value><span>в рублях</span><RowCode $lift={5}>по ОКЕИ</RowCode></FormRow>
        <FormRow $h={14}>Местонахождение (адрес)</FormRow>
        <FormRow $h={16} $pl={0}><Value $w={556} $pl={3} $b $line $ls={0.04}>433 00, Ульяновская обл, Димитрова<RedMark /></Value></FormRow>
      </FormLeft>
      <Codes>
        <CodesHead>Коды</CodesHead>
        <CodesBody>
          <CodeLine $h={17}><CodeCell>0710001</CodeCell></CodeLine>
          <CodeLine $h={25} $cols="41px 43px 1fr"><CodeCell>31</CodeCell><CodeCell>12</CodeCell><CodeCell>2017</CodeCell></CodeLine>
          <CodeLine $h={15} /><CodeLine $h={25} /><CodeLine $h={29} />
          <CodeLine $h={44} $cols="62px 1fr"><CodeCell>50102</CodeCell><CodeCell>16</CodeCell></CodeLine>
          <CodeLine $h={19} $pt={4}><CodeCell>383</CodeCell></CodeLine>
        </CodesBody>
      </Codes>
    </FormHead>
    <Table>
      <HeadRow>
        <HeadCell $ls={0.2}>Пояснения</HeadCell><HeadCell $ls={0.1}>Наименование показателя</HeadCell><HeadCell>Код</HeadCell>
        {[2017, 2016, 2015].map((y) => <HeadCell key={y} $p="2px 3px 0 0">На 31 декабря<br />{y} г.</HeadCell>)}
      </HeadRow>
      <BodyRow $h={40}>
        <Cell /><Section><span>АКТИВ</span><span>I. ВНЕОБОРОТНЫЕ АКТИВЫ</span></Section><Cell $thick /><Cell $top /><Cell $top /><Cell $top $thick />
      </BodyRow>
      {balance.map((d) => <Item key={d.code} d={d} />)}
    </Table>
    <CellCursor />
  </Sheet>
);

export default function App() {
  return (
    <Desktop>
      <Global />
      <Window>
        <TitleBar>
          <OrbSlot $w={22}><Orb1C s={16} /></OrbSlot>
          <OrbSlot $w={22}><MenuOrb /></OrbSlot>
          <BarSep />
          <WindowTitle>{"Бухгалтерия предприятия (учебная), редакция 3.0 / <Не указан>  (1С:Предприятие, учебная версия)"}</WindowTitle>
          <Slot $w={24} $dim><Floppy /></Slot><Slot $w={24} $dim><Printer /></Slot><Slot $w={20} $dim><Preview /></Slot>
          <BarSep $gap={5} />
          <Slot $w={26}><StarAdd /></Slot><Slot $w={20} $dim><StarPage /></Slot>
          <BarSep $gap={4} />
          <Slot $w={25}><Calc /></Slot><Slot $w={21}><CalendarIcon /></Slot>
          <BarSep $gap={4} />
          <Slot $w={24}><MemText>M</MemText></Slot><Slot $w={22}><MemText>M+</MemText></Slot><Slot $w={24}><MemText>M-</MemText></Slot>
          <BarSep $gap={3} />
          <Slot $w={26}><Panes /></Slot>
          <BarSep $gap={1} />
          <Slot $w={26}><InfoOrange /></Slot><Slot $w={10}><Caret $m="7px 0 0 0" /></Slot>
          <BarSep $gap={3} />
          <Slot $w={24}><Minus /></Slot><Slot $w={20}><Restore /></Slot><Slot $w={24}><Cross /></Slot>
        </TitleBar>
        <TitleStrip />
        <Client>
          <Sidebar>
            <SideIcons><GridIcon /><SideStar /><Scroll /><SideSearch /></SideIcons>
            <SideList>{menu.map((m) => <SideItem key={m}>{m}</SideItem>)}</SideList>
          </Sidebar>
          <Main>
            <Head>
              <NavButton><Home /></NavButton>
              <NavPair><NavHalf><Arrow /></NavHalf><NavHalf><Arrow flip /></NavHalf></NavPair>
              <Title>Бухгалтерская отчетность (Курнаев Е. О. ИП) *</Title>
              <CloseX><ThinCross /></CloseX>
            </Head>
            <Toolbar>
              <PrimaryButton>Записать и закрыть</PrimaryButton>
              {tools.map((b) => (
                <Button key={b.t} $w={b.w} $push={b.push}><ButtonIcon>{b.icon}</ButtonIcon><ButtonText>{b.t}</ButtonText>{b.drop && <Caret />}</Button>
              ))}
              <Button $w={86} $push="auto" $gap={0}><ButtonIcon /><ButtonText>Еще</ButtonText><Caret /></Button>
              <Button $w={26} $ink="#111" $fs={14}><ButtonText $center>?</ButtonText></Button>
            </Toolbar>
            <Status>Не отправлено</Status>
            <Notice>
              <ChartUp />
              <Link $m="9px 0 0 18px" $ls={-0.034}>Создать отчет "Бухгалтерская отчетность в Росстат" для представления в Росстат обязательного экземпляра годовой бухгалтерской отчетности в электронном виде.</Link>
            </Notice>
            <Filters>
              <Label $w={90}>Дата подписи:</Label>
              <Field $w={70} $mr={10}><FieldText>07.11.2</FieldText><FieldKnob $w={21}><MiniCalendar /></FieldKnob></Field>
              <Label $w={100}>Вид документа:</Label>
              <Field $w={100} $mr={10}><FieldText>Первичный</FieldText><FieldKnob $w={21}><Caret $m="0" /></FieldKnob></Field>
              <Label $w={20}>/</Label>
              <Field $w={40} $mr={10} $off><FieldText $pl={8}>1</FieldText>
                <FieldKnob $w={21} $off><SpinHalf><SpinTip $up /></SpinHalf><SpinHalf><SpinTip /></SpinHalf></FieldKnob>
              </Field>
              <Label $w={140}>Вид сдачи отчетности:</Label>
              <Field $w={130} $mr={11}><FieldText>Обычная</FieldText><FieldKnob $w={21}><Caret $m="0" /></FieldKnob></Field>
              <Link $ls={-0.07}>Организации для заполнения...</Link>
            </Filters>
            <Work>
              <TreePanel>
                <TreeList>
                  {tree.map(([t, ls], i) => <TreeRow key={t}><FileIcon /><TreeLabel $active={i === 0} $ls={ls}>{t}</TreeLabel></TreeRow>)}
                </TreeList>
                <ScrollRow $p="0 9px 0 9px"><Tip $d="left" /><Track><Thumb $len={368} /></Track><Tip $d="right" /></ScrollRow>
              </TreePanel>
              <Right>
                <ReportPanel>
                  <Report />
                  <ScrollCol><Tip $d="up" /><Track $v><Thumb $v $len={177} /></Track><Tip $d="down" /></ScrollCol>
                  <ScrollRow $p="0 9px 0 9px"><Tip $d="left" /><Track><Thumb $len={1115} /></Track><Tip $d="right" /></ScrollRow>
                </ReportPanel>
                <RowActions>
                  <ActionButton $w={150}><AddRound /><ButtonText $center>Добавить строку</ButtonText></ActionButton>
                  <ActionButton $w={150}><DelRound /><ButtonText $center>Удалить строку</ButtonText></ActionButton>
                  <ActionButton $w={150}><Wrench /><ButtonText $center>Настроить строки</ButtonText></ActionButton>
                </RowActions>
              </Right>
            </Work>
            <Comment><Label $w={90} $ls={-0.15}>Комментарий:</Label><CommentInput /></Comment>
          </Main>
        </Client>
      </Window>
      <Taskbar>
        <Task $w={48}><WinLogo /></Task><Task $w={48}><TaskSearch /></Task><Task $w={49}><TaskView /></Task>
        <Task $w={49.2}><VBox /></Task><Task $w={49.2}><Eclipse /></Task><Task $w={49.2}><NetBeans /></Task><Task $w={49.2}><VS /></Task>
        <OpenTask $w={49.2}><Folder /><Under /></OpenTask><OpenTask $w={49.2}><Chrome /><Under /></OpenTask><OpenTask $w={49.2}><Word /><Under $stack /></OpenTask>
        <Task $w={48} $active><Orb1C s={23} /></Task>
        <Tray>
          <Slot $w={24}><TrayUp /></Slot><Slot $w={25}><Battery /></Slot><Slot $w={24}><Wifi /></Slot><Slot $w={22}><Muted /></Slot>
          <Lang>РУС</Lang>
          <Clock>10:15<br />07.11.2017</Clock>
          <Slot $w={44}><Note /></Slot>
          <PeekLine />
        </Tray>
      </Taskbar>
    </Desktop>
  );
}
